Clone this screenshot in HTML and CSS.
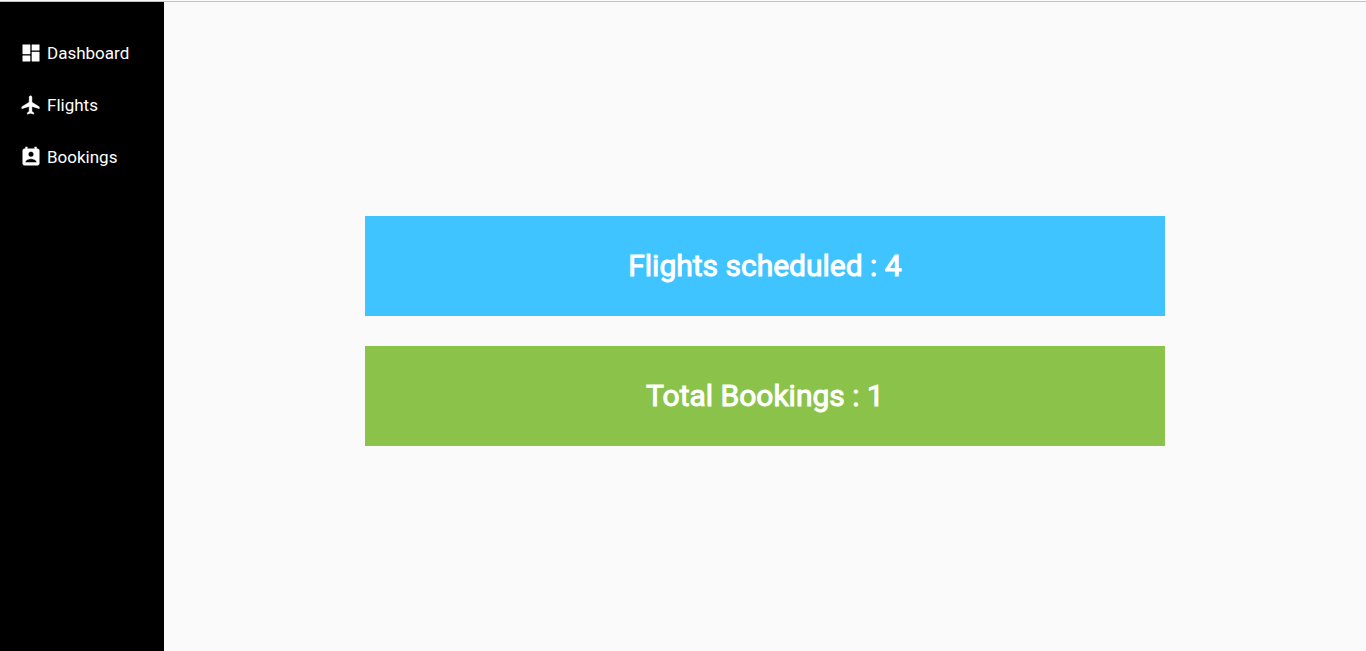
FILE: index.html
```html
<!DOCTYPE html>
<html lang="en">
<head>
<meta charset="utf-8">
<title>Dashboard</title>
<link rel="stylesheet" href="styles.css">
</head>
<body>
<div class="layout">
  <nav class="sidebar" aria-label="Main">
    <a class="nav-link" href="#dashboard">
      <svg class="icon" viewBox="0 0 24 24" aria-hidden="true"><path d="M3 13h8V3H3v10zm0 8h8v-6H3v6zm10 0h8V11h-8v10zm0-18v6h8V3h-8z"/></svg>
      <span>Dashboard</span>
    </a>
    <a class="nav-link" href="#flights">
      <svg class="icon" viewBox="0 0 24 24" aria-hidden="true"><path d="M21 16v-2l-8-5V3.500c0-.83-.67-1.500-1.500-1.500S10 2.670 10 3.500V9l-8 5v2l8-2.500V19l-2 1.500V22l3.500-1 3.500 1v-1.500L13 19v-5.500l8 2.500z"/></svg>
      <span>Flights</span>
    </a>
    <a class="nav-link" href="#bookings">
      <svg class="icon" viewBox="0 0 24 24" aria-hidden="true"><path d="M19 3h-1V1h-2v2H8V1H6v2H5c-1.110 0-2 .9-2 2v14c0 1.100.89 2 2 2h14c1.100 0 2-.9 2-2V5c0-1.100-.9-2-2-2zm-7 3c1.660 0 3 1.340 3 3s-1.340 3-3 3-3-1.340-3-3 1.340-3 3-3zm6 12H6v-1c0-2 4-3.100 6-3.100s6 1.100 6 3.100v1z"/></svg>
      <span>Bookings</span>
    </a>
  </nav>
  <main class="content">
    <section class="card card-flights"><h2 class="card-title">Flights scheduled : 4</h2></section>
    <section class="card card-bookings"><h2 class="card-title">Total Bookings : 1</h2></section>
  </main>
</div>
</body>
</html>
```
FILE: styles.css
```css
* { box-sizing: border-box; }
body {
  display: flex;
  flex-direction: column;
  min-height: 100vh;
  margin: 0;
  padding-top: 1px;
  background: #fafafa;
  font-family: Roboto, "Liberation Sans", sans-serif;
}
.layout {
  flex: 1;
  display: flex;
  border-top: 1px solid #c4c4c4;
}
.sidebar {
  flex: 0 0 12%;
  display: flex;
  flex-direction: column;
  gap: 28px;
  padding: 39px 20px;
  background: #000;
}
.nav-link {
  display: flex;
  align-items: center;
  gap: 5px;
  color: #fff;
  font-size: 17px;
  line-height: 24px;
  text-decoration: none;
}
.icon {
  width: 22px;
  height: 22px;
  fill: currentColor;
}
.icon path {
  stroke: currentColor;
  stroke-width: 0.5;
}
.content {
  flex: 1;
  display: flex;
  flex-direction: column;
  align-items: center;
  justify-content: center;
  gap: 30px;
  padding: 28px 20px 20px;
}
.card {
  display: flex;
  align-items: center;
  justify-content: center;
  width: 100%;
  max-width: 800px;
  min-height: 100px;
}
.card-flights { background: #40c4ff; }
.card-bookings { background: #8bc34a; }
.card-title {
  margin: 0;
  color: #fff;
  font-size: 30px;
  font-weight: 400;
  line-height: 36px;
  -webkit-text-stroke: 1px currentColor;
}
```
